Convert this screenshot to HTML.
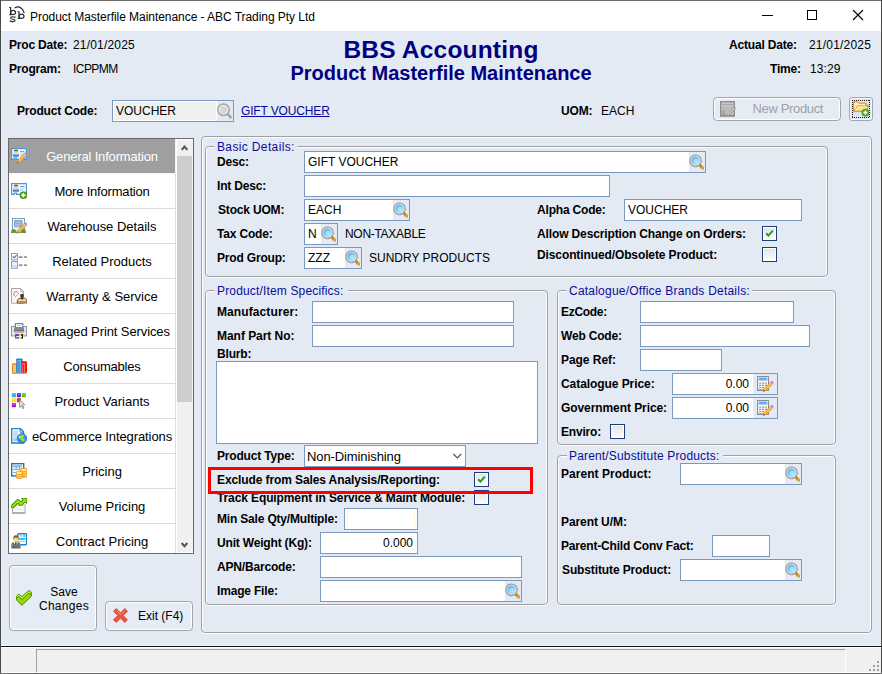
<!DOCTYPE html>
<html>
<head>
<meta charset="utf-8">
<title>Product Masterfile Maintenance</title>
<style>
html,body{margin:0;padding:0;}
body{width:882px;height:674px;overflow:hidden;background:#E3EAF4;font-family:"Liberation Sans",sans-serif;font-size:12px;color:#000;position:relative;}
#win{position:absolute;left:0;top:0;width:882px;height:674px;overflow:hidden;}
.abs,.b,.t,.lg,.in,.ck,.grp,.mi,.btn{position:absolute;box-sizing:border-box;}
.b{font-weight:bold;font-size:12px;line-height:14px;white-space:nowrap;letter-spacing:-0.18px;}
.t{font-weight:normal;font-size:12px;line-height:14px;white-space:nowrap;}
.in{background:#fff;border:1px solid #7A99C0;}
.ck{width:15px;height:15px;background:#fff;border:1px solid #1C3F7C;}
.cki{position:absolute;left:1px;top:1px;right:1px;bottom:1px;background:linear-gradient(#E6E6E6,#FBFBFB);}
.grp{border:1px solid #A0A0A0;border-radius:4px;box-shadow:inset 1px 1px 0 #fff, inset -1px 0 0 #fff, 0 1px 0 #fff;}
.lg{font-size:12px;line-height:14px;color:#0C0C9C;white-space:nowrap;letter-spacing:0.16px;}
.mi{left:9px;width:166px;overflow:hidden;}
.mt{font-size:13px;line-height:35px;text-align:center;white-space:nowrap;}
.btn{border:1px solid #A6A6A6;border-radius:4px;background:#E5ECF6;box-shadow:inset 0 0 0 1px #fff;font-size:12px;}
</style>
</head>
<body>
<div id="win">
<!-- title bar -->
<div class="abs" style="left:0;top:0;width:882px;height:31px;background:#fff;"></div>
<svg class="abs" style="left:8px;top:4px" width="20" height="20" viewBox="0 0 20 20"><g fill="none" stroke="#2C2C2C" stroke-width="1.15"><path d="M1.2 3.5 H2.6 V10.6 M1.2 10.6 H3.6"/><ellipse cx="5.1" cy="8.5" rx="2.4" ry="2.1"/><path d="M7 13.4 Q4.6 12.2 3 13.2 Q1.8 14.8 4.6 15.2 Q7.8 15.7 6.8 17.1 Q4.8 18.4 2.2 16.9 M7 12.6 V13.8 M2.2 16.2 V17.6"/><path d="M9.6 7.9 H11 V14.4 M9.6 14.4 H12"/><ellipse cx="13.6" cy="12.2" rx="2.4" ry="2.1"/><path d="M6.6 3.9 Q11.5 1 14.6 5.6 Q15.8 7.4 16.2 9.2" stroke-width="1.2"/></g></svg>
<div class="abs" id="ttl" style="left:30px;top:8.5px;font-size:12px;line-height:16px;white-space:nowrap;letter-spacing:-0.05px;">Product Masterfile Maintenance - ABC Trading Pty Ltd</div>
<div class="abs" style="left:762px;top:15px;width:11px;height:1px;background:#000;"></div>
<div class="abs" style="left:807px;top:10px;width:10px;height:10px;border:1px solid #000;"></div>
<svg class="abs" style="left:852px;top:9px" width="12" height="12" viewBox="0 0 12 12"><path d="M1 1 L11 11 M11 1 L1 11" stroke="#000" stroke-width="1.1"/></svg>
<!-- header -->
<div class="b" style="left:9px;top:38px;">Proc Date:</div>
<div class="t" style="left:73px;top:38px;letter-spacing:0.18px;">21/01/2025</div>
<div class="b" style="left:9px;top:62px;">Program:</div>
<div class="t" style="left:73px;top:62px;letter-spacing:-0.55px;">ICPPMM</div>
<div class="abs" id="h1" style="left:0;width:882px;top:36px;text-align:center;font-weight:bold;font-size:24.5px;line-height:28px;color:#000080;letter-spacing:0.2px;">BBS Accounting</div>
<div class="abs" id="h2" style="left:0;width:882px;top:61px;text-align:center;font-weight:bold;font-size:20px;line-height:24px;color:#000080;">Product Masterfile Maintenance</div>
<div class="b" style="left:729px;top:38px;">Actual Date:</div>
<div class="t" style="left:809px;top:38px;letter-spacing:0.2px;">21/01/2025</div>
<div class="b" style="left:770px;top:62px;">Time:</div>
<div class="t" style="left:810px;top:62px;letter-spacing:0.1px;">13:29</div>
<!-- product code row -->
<div class="b" style="left:17px;top:104px;">Product Code:</div>
<div class="in" style="left:112px;top:100px;width:122px;height:22px;"><div class="abs" style="left:1px;top:1px;right:17px;bottom:1px;background:#F0F0F0;"></div><div class="abs" style="right:0;top:0;width:16px;height:20px;background:#E3EAF4;"></div><div class="t" style="left:3px;top:3px;">VOUCHER</div></div><svg class="abs" style="left:217px;top:103px" width="16" height="16" viewBox="0 0 16 16"><line x1="11.2" y1="11.6" x2="13.6" y2="14.2" stroke="#A6A6A6" stroke-width="2.8" stroke-linecap="round"/><circle cx="6.5" cy="6.8" r="5.7" fill="#fff" stroke="#9E9E9E" stroke-width="1.5"/><circle cx="6.5" cy="6.8" r="4.2" fill="#D6D6D6"/></svg>
<div class="t" style="left:241px;top:104px;color:#0808A0;text-decoration:underline;letter-spacing:-0.15px;">GIFT VOUCHER</div>
<div class="b" style="left:561px;top:104px;">UOM:</div>
<div class="t" style="left:601px;top:104px;">EACH</div>
<div class="btn" style="left:713px;top:97px;width:128px;height:24px;color:#A0A0A0;font-size:13px;"><span class="abs" id="np" style="left:38.5px;top:3px;line-height:15px;white-space:nowrap;letter-spacing:-0.35px;">New Product</span></div>
<svg class="abs" style="left:720px;top:101px" width="17" height="16" viewBox="0 0 17 16"><rect x="0.6" y="0.6" width="13.8" height="14.6" fill="#BDBDBD" stroke="#8C8C8C" stroke-width="1.2"/><rect x="2" y="2" width="11" height="2.6" fill="#CFCFCF"/><rect x="2.4" y="2.8" width="10.2" height="1" fill="#9C9C9C"/><rect x="1.6" y="9.6" width="3.6" height="3.8" fill="#A4A4A4"/><rect x="1.2" y="13.8" width="12.6" height="1.2" fill="#8C8C8C"/><path d="M14.2 6 L7.4 12.8 L6.4 15 L8.8 14.2 L15.8 7.4Z" fill="#DADADA" stroke="#8A8A8A" stroke-width="0.7"/><path d="M8 13.6 L14.8 6.8" stroke="#9A9A9A" stroke-width="0.6"/></svg>
<div class="abs" style="left:849px;top:97px;width:24px;height:24px;border:1px solid #A4A8AE;border-radius:3px;background:#DCE8F8;box-shadow:inset 0 0 0 1px #F4F8FD;"></div>
<svg class="abs" style="left:852px;top:100px" width="18" height="18" viewBox="0 0 18 18"><g stroke="#2A1A0A" stroke-width="1" stroke-dasharray="1 1" shape-rendering="crispEdges"><line x1="0" y1="0.5" x2="18" y2="0.5"/><line x1="0" y1="17.5" x2="18" y2="17.5"/><line x1="0.5" y1="0" x2="0.5" y2="18"/><line x1="17.5" y1="0" x2="17.5" y2="18"/></g></svg>
<svg class="abs" style="left:853px;top:101px" width="16" height="16" viewBox="0 0 16 16"><g transform="translate(0,-0.8)"><path d="M0.6 1.6 H5 L6.2 2.8 H13 V5 H15.4 L13.4 11.4 H0.6Z" fill="#F4C060" stroke="#D89030" stroke-width="1"/><path d="M1.4 2.6 H4.6 L5.8 3.8 H12 V5 H4.6 L2.2 10.4 H1.4Z" fill="#FFF4C0"/><path d="M1.2 11 L4.4 5.8 H15 L13 11Z" fill="#FCE090" stroke="#D89030" stroke-width="0.8"/><path d="M2.6 10.2 L5 6.8 H13.4" fill="none" stroke="#FFF8D0" stroke-width="0.9"/></g><circle cx="12.4" cy="11.6" r="3.6" fill="#4CA81C" stroke="#38900C" stroke-width="0.6"/><path d="M12.4 9.5 V13.7 M10.3 11.6 H14.5" stroke="#fff" stroke-width="1.5"/></svg>

<!-- left menu -->
<div class="abs" style="left:8px;top:138px;width:186px;height:416px;border:1px solid #6A6A6A;background:#fff;"></div>
<div class="mi" style="top:139px;height:34px;background:#9F9F9F;color:#fff;"><div class="abs" style="left:2px;top:9px;width:16px;height:16px;"><svg width="16" height="16" viewBox="0 0 16 16"><path d="M0.6 0.6 H15.4 V11.4 H13.6 V10.2 H11.4 V11.4 H5.6 V10.2 H3.2 V11.4 H0.6Z" fill="#fff" stroke="#4A98D8" stroke-width="1.2"/><rect x="2" y="2" width="6" height="6.8" fill="#D8ECFC"/><path d="M2 8.8 V6.6 Q3.4 5.8 5 6.8 Q6.6 5.8 8 6.6 V8.8Z" fill="#3A86E0"/><rect x="4.4" y="4.6" width="1.3" height="2" fill="#F0C890"/><circle cx="5" cy="3.9" r="1.5" fill="#F4CC98"/><path d="M3.2 4 Q2.8 1.6 5 1.6 Q7.2 1.6 6.8 4 Q6.4 2.8 5 2.9 Q3.6 2.8 3.2 4Z" fill="#8A4A12"/><rect x="9" y="3.2" width="4.4" height="1" fill="#4A8CD8"/><rect x="9" y="5.2" width="4.4" height="0.8" fill="#C8E0F4"/><rect x="9" y="6.6" width="2.6" height="0.8" fill="#9A9A9A"/><path d="M13 5.6 L15.3 7.9 L8.7 14.5 L6.4 12.2Z" fill="#F59A1A"/><path d="M13.6 6.2 L14.7 7.3 L8.1 13.9 L7 12.8Z" fill="#FFC040"/><path d="M6.4 12.2 L8.7 14.5 L5.9 15.5Z" fill="#C89060"/><path d="M5.9 15.5 L6.3 14.3 L7.1 15.1Z" fill="#604020"/><path d="M12 6.6 L13 5.6 L15.3 7.9 L14.3 8.9Z" fill="#E8E8E8" stroke="#808080" stroke-width="0.4"/><path d="M13 5.6 L14 4.6 Q15.2 4.2 15.9 5 Q16.6 5.9 16.2 6.9 L15.3 7.9Z" fill="#E878C8"/></svg></div><div class="abs mt" id="m0" style="left:18px;width:150px;top:0;letter-spacing:-0.17px;">General Information</div></div><div class="abs" style="left:9px;top:173px;width:166px;height:1px;background:#F4F4F4;"></div><div class="mi" style="top:174px;height:34px;background:#fff;color:#000;"><div class="abs" style="left:2px;top:9px;width:16px;height:16px;"><svg width="16" height="16" viewBox="0 0 16 16"><path d="M0.6 0.6 H15.4 V11.4 H13.6 V10.2 H11.4 V11.4 H5.6 V10.2 H3.2 V11.4 H0.6Z" fill="#fff" stroke="#4A98D8" stroke-width="1.2"/><rect x="2" y="2" width="6" height="6.8" fill="#D8ECFC"/><path d="M2 8.8 V6.6 Q3.4 5.8 5 6.8 Q6.6 5.8 8 6.6 V8.8Z" fill="#3A86E0"/><rect x="4.4" y="4.6" width="1.3" height="2" fill="#F0C890"/><circle cx="5" cy="3.9" r="1.5" fill="#F4CC98"/><path d="M3.2 4 Q2.8 1.6 5 1.6 Q7.2 1.6 6.8 4 Q6.4 2.8 5 2.9 Q3.6 2.8 3.2 4Z" fill="#8A4A12"/><rect x="9" y="3.2" width="4.4" height="1" fill="#4A8CD8"/><rect x="9" y="5.2" width="4.4" height="0.8" fill="#C8E0F4"/><rect x="9" y="6.6" width="2.6" height="0.8" fill="#9A9A9A"/><circle cx="12.4" cy="12.2" r="3.5" fill="#58A820" stroke="#3A8010" stroke-width="0.7"/><path d="M12.4 10.1 V14.3 M10.3 12.2 H14.5" stroke="#fff" stroke-width="1.5"/></svg></div><div class="abs mt" id="m1" style="left:18px;width:150px;top:0;letter-spacing:-0.19px;">More Information</div></div><div class="abs" style="left:9px;top:208px;width:166px;height:1px;background:#DCDCDC;"></div><div class="mi" style="top:209px;height:34px;background:#fff;color:#000;"><div class="abs" style="left:2px;top:9px;width:16px;height:16px;"><svg width="16" height="16" viewBox="0 0 16 16"><rect x="1.5" y="0.5" width="12" height="12.5" fill="#F4F8FD" stroke="#7A9BC4"/><rect x="3" y="2" width="8.6" height="7.6" rx="1" fill="#8CA8CC"/><g fill="#F0F4FA"><rect x="4.6" y="3.9" width="1" height="0.9"/><rect x="6.6" y="3.9" width="1" height="0.9"/><rect x="8.6" y="3.9" width="1" height="0.9"/><rect x="4.6" y="5.9" width="1" height="0.9"/><rect x="6.6" y="5.9" width="1" height="0.9"/><rect x="8.6" y="5.9" width="1" height="0.9"/><rect x="4.6" y="7.9" width="1" height="0.9"/><rect x="6.6" y="7.9" width="1" height="0.9"/></g><path d="M0 14.4 Q0.2 11 2.6 11 Q5 11 5.2 14.4Z" fill="#5AA01E"/><path d="M9.8 14.4 Q10 11 12.4 11 Q14.8 11 15 14.4Z" fill="#5AA01E"/><rect x="0" y="14" width="15" height="0.9" fill="#6A8A4A"/><path d="M13 5.6 L15.3 7.9 L8.7 14.5 L6.4 12.2Z" fill="#F59A1A"/><path d="M13.6 6.2 L14.7 7.3 L8.1 13.9 L7 12.8Z" fill="#FFC040"/><path d="M6.4 12.2 L8.7 14.5 L5.9 15.5Z" fill="#C89060"/><path d="M5.9 15.5 L6.3 14.3 L7.1 15.1Z" fill="#604020"/><path d="M12 6.6 L13 5.6 L15.3 7.9 L14.3 8.9Z" fill="#E8E8E8" stroke="#808080" stroke-width="0.4"/><path d="M13 5.6 L14 4.6 Q15.2 4.2 15.9 5 Q16.6 5.9 16.2 6.9 L15.3 7.9Z" fill="#E878C8"/></svg></div><div class="abs mt" id="m2" style="left:18px;width:150px;top:0;letter-spacing:-0.03px;">Warehouse Details</div></div><div class="abs" style="left:9px;top:243px;width:166px;height:1px;background:#DCDCDC;"></div><div class="mi" style="top:244px;height:34px;background:#fff;color:#000;"><div class="abs" style="left:2px;top:9px;width:16px;height:16px;"><svg width="16" height="16" viewBox="0 0 16 16"><rect x="0.5" y="0.5" width="6" height="6.4" fill="#fff" stroke="#8CA0C0"/><path d="M1.8 3.4 L3.2 4.8 L5.6 2.2" fill="none" stroke="#2A78D0" stroke-width="1.2"/><rect x="0.5" y="8.5" width="6" height="6.8" fill="#EEF3FA" stroke="#8CA0C0"/><rect x="1" y="12" width="5" height="2.8" fill="#D4E0F0"/><g fill="#858585"><rect x="7.8" y="3.3" width="3.8" height="1.5"/><rect x="13" y="3.3" width="3" height="1.5"/><rect x="7.8" y="11.4" width="3.8" height="1.5"/><rect x="13" y="11.4" width="3" height="1.5"/></g></svg></div><div class="abs mt" id="m3" style="left:18px;width:150px;top:0;letter-spacing:0px;">Related Products</div></div><div class="abs" style="left:9px;top:278px;width:166px;height:1px;background:#DCDCDC;"></div><div class="mi" style="top:279px;height:34px;background:#fff;color:#000;"><div class="abs" style="left:2px;top:9px;width:16px;height:16px;"><svg width="16" height="16" viewBox="0 0 16 16"><path d="M0.5 0.5 H9.5 L12.4 3.4 V15.2 H0.5Z" fill="#fff" stroke="#A4A4A4"/><path d="M9.5 0.5 V3.4 H12.4" fill="none" stroke="#A4A4A4" stroke-width="0.8"/><rect x="1.6" y="2" width="3" height="11" fill="#EEF2F6"/><path d="M5.2 3 L8 5.6 L4.6 8.6 L2.2 6.2Z" fill="none" stroke="#E82020" stroke-width="1" stroke-dasharray="0.9 0.6"/><path d="M6.2 15 Q5.8 10.2 9 10.2 H13.4 Q16.2 10.2 15.8 15Z" fill="#F0D4A8" stroke="#8A4A10" stroke-width="1"/><rect x="7" y="13" width="8" height="1" fill="#C88838"/><rect x="9.9" y="8" width="2.2" height="3.4" fill="#2A3A50"/><ellipse cx="11" cy="7.6" rx="1.9" ry="1.9" fill="#3A3A3A"/></svg></div><div class="abs mt" id="m4" style="left:18px;width:150px;top:0;letter-spacing:0px;">Warranty &amp; Service</div></div><div class="abs" style="left:9px;top:313px;width:166px;height:1px;background:#DCDCDC;"></div><div class="mi" style="top:314px;height:34px;background:#fff;color:#000;"><div class="abs" style="left:2px;top:9px;width:16px;height:16px;"><svg width="16" height="16" viewBox="0 0 16 16"><rect x="0.5" y="3.5" width="15" height="9.4" fill="#E6EAEE" stroke="#929292"/><rect x="4.4" y="0.6" width="7.4" height="4" fill="#fff" stroke="#3A88D0" stroke-width="1.1"/><rect x="6" y="2.2" width="4" height="0.8" fill="#A0C8F0"/><rect x="3" y="4.6" width="10" height="2.4" fill="#8A8A8A"/><rect x="2.8" y="7" width="10.4" height="1.6" fill="#6E6E6E"/><rect x="3" y="8.6" width="10" height="1.6" fill="#B8BCC4"/><rect x="4" y="11" width="8" height="4.6" fill="#fff"/><rect x="4" y="11" width="2" height="4.6" fill="#0878E0"/><rect x="6" y="11" width="2" height="4.6" fill="#E81090"/><rect x="8" y="11" width="2.2" height="4.6" fill="#F8E000"/><rect x="10.2" y="11" width="1.8" height="4.6" fill="#202020"/><rect x="5" y="13.2" width="6" height="0.9" fill="#fff"/></svg></div><div class="abs mt" id="m5" style="left:18px;width:150px;top:0;letter-spacing:-0.1px;">Managed Print Services</div></div><div class="abs" style="left:9px;top:348px;width:166px;height:1px;background:#DCDCDC;"></div><div class="mi" style="top:349px;height:34px;background:#fff;color:#000;"><div class="abs" style="left:2px;top:9px;width:16px;height:16px;"><svg width="16" height="16" viewBox="0 0 16 16"><rect x="1" y="5.2" width="5" height="9.8" rx="1" fill="#F08A10"/><rect x="2.2" y="6.6" width="2.8" height="8.4" fill="#F8C878"/><rect x="5.2" y="0.4" width="6.4" height="14.6" rx="1.2" fill="#2A80D0"/><rect x="6.4" y="2" width="3.6" height="13" fill="#70B8F4"/><rect x="7.2" y="3" width="1.4" height="12" fill="#3A88D8"/><rect x="10" y="3.2" width="6" height="11.8" rx="1.2" fill="#E81010"/><rect x="10.6" y="5" width="3.6" height="10" fill="#FF6A60"/><rect x="11.6" y="6" width="1.4" height="9" fill="#F02A20"/><rect x="1" y="14.8" width="14" height="0.9" fill="#8A8A8A"/></svg></div><div class="abs mt" id="m6" style="left:18px;width:150px;top:0;letter-spacing:-0.2px;">Consumables</div></div><div class="abs" style="left:9px;top:383px;width:166px;height:1px;background:#DCDCDC;"></div><div class="mi" style="top:384px;height:34px;background:#fff;color:#000;"><div class="abs" style="left:2px;top:9px;width:16px;height:16px;"><svg width="16" height="16" viewBox="0 0 16 16"><rect x="0.9" y="0.2" width="4" height="4" fill="#20A8FF"/><rect x="5.9" y="0.2" width="4" height="4" fill="#2232D8"/><rect x="10.9" y="0.2" width="4" height="4" fill="#60C000"/><rect x="0.9" y="5.2" width="4" height="4" fill="#FFE000"/><rect x="5.9" y="5.2" width="4" height="4" fill="#F02810"/><rect x="0.9" y="10.2" width="4" height="4" fill="#B400F0"/><g fill="#fff" opacity="0.45"><rect x="1.9" y="1.2" width="2" height="1"/><rect x="6.9" y="1.2" width="2" height="1"/><rect x="11.9" y="1.2" width="2" height="1"/><rect x="1.9" y="6.2" width="2" height="1"/><rect x="1.9" y="11.2" width="2" height="1"/></g><path d="M8.6 6.8 L8.6 14.4 L10.4 12.8 L11.8 15.6 L13 15 L11.6 12.2 L13.8 11.8Z" fill="#E4E4E4" stroke="#8A8A8A" stroke-width="0.9"/></svg></div><div class="abs mt" id="m7" style="left:18px;width:150px;top:0;letter-spacing:0px;">Product Variants</div></div><div class="abs" style="left:9px;top:418px;width:166px;height:1px;background:#DCDCDC;"></div><div class="mi" style="top:419px;height:34px;background:#fff;color:#000;"><div class="abs" style="left:2px;top:9px;width:16px;height:16px;"><svg width="16" height="16" viewBox="0 0 16 16"><path d="M0.7 0.7 H9.6 L12.6 3.7 V15 H0.7Z" fill="#fff" stroke="#2080C8" stroke-width="1.3"/><path d="M9.2 0.8 V4.2 H12.6" fill="none" stroke="#2080C8" stroke-width="1"/><rect x="2.2" y="2.4" width="4.6" height="7.6" fill="#C4DCF0"/><rect x="2.2" y="10.4" width="4.6" height="3" fill="#A8CCE8"/><circle cx="11" cy="10.4" r="4.8" fill="#2A90F0" stroke="#1A6CC8" stroke-width="0.7"/><path d="M9.2 7.2 Q11 6 13 7 L13.6 8.6 L12.2 9.6 L13 11.2 L14 11.6 Q13.4 13.8 11.8 14 L10.8 12.4 L9.4 11.6 Q8.6 9.2 9.2 7.2Z" fill="#A0E010"/><ellipse cx="8.6" cy="9" rx="1" ry="1.6" fill="#C8E8FF" opacity="0.8"/></svg></div><div class="abs mt" id="m8" style="left:18px;width:150px;top:0;letter-spacing:-0.1px;">eCommerce Integrations</div></div><div class="abs" style="left:9px;top:453px;width:166px;height:1px;background:#DCDCDC;"></div><div class="mi" style="top:454px;height:34px;background:#fff;color:#000;"><div class="abs" style="left:2px;top:9px;width:16px;height:16px;"><svg width="16" height="16" viewBox="0 0 16 16"><rect x="0.7" y="0.7" width="12" height="12.2" fill="#fff" stroke="#1878C0" stroke-width="1.4"/><g fill="#F8B020"><rect x="2" y="2.2" width="2.6" height="1"/><rect x="6" y="2.2" width="2" height="1"/><rect x="9" y="2.2" width="2" height="1"/></g><path d="M2 3.8H11M2 6.4H9M2 9.4H5M5.2 2V7M8.4 2V6" stroke="#5AA0E0" stroke-width="0.9"/><rect x="9.6" y="5.2" width="6.2" height="9" rx="1.4" fill="#FFD850" stroke="#F09020" stroke-width="0.9"/><path d="M10.4 8.6H15M10.4 10.8H15M10.4 12.6H15" stroke="#F0A030" stroke-width="0.8"/><rect x="10.6" y="6" width="4.2" height="1.6" fill="#FFF0A0"/><rect x="5.2" y="8.2" width="6.4" height="7.2" rx="1.4" fill="#FFD850" stroke="#F09020" stroke-width="0.9"/><path d="M6 11.4H10.8M6 13.4H10.8" stroke="#F0A030" stroke-width="0.8"/><rect x="6.2" y="9" width="4.4" height="1.6" fill="#FFF0A0"/></svg></div><div class="abs mt" id="m9" style="left:18px;width:150px;top:0;letter-spacing:0px;">Pricing</div></div><div class="abs" style="left:9px;top:488px;width:166px;height:1px;background:#DCDCDC;"></div><div class="mi" style="top:489px;height:34px;background:#fff;color:#000;"><div class="abs" style="left:2px;top:9px;width:16px;height:16px;"><svg width="16" height="16" viewBox="0 0 16 16"><rect x="1.5" y="7" width="12.6" height="8.2" fill="#fff" stroke="#ABABAB"/><rect x="1.5" y="14.2" width="12.6" height="1.2" fill="#A0A0A0"/><path d="M2 10H14M2 12H14" stroke="#DADADA" stroke-width="0.7"/><path d="M1.8 8.4 L6.8 3 L10 6 L13.6 2.4" fill="none" stroke="#3A8E00" stroke-width="3.8" stroke-linecap="round" stroke-linejoin="round"/><path d="M10.4 0.3 H15.9 V5.8Z" fill="#9ADA00" stroke="#3A8E00" stroke-width="0.9" stroke-linejoin="round"/><path d="M1.8 8.4 L6.8 3 L10 6 L13.6 2.4" fill="none" stroke="#A6E000" stroke-width="2" stroke-linecap="round" stroke-linejoin="round"/></svg></div><div class="abs mt" id="m10" style="left:18px;width:150px;top:0;letter-spacing:0px;">Volume Pricing</div></div><div class="abs" style="left:9px;top:523px;width:166px;height:1px;background:#DCDCDC;"></div><div class="mi" style="top:524px;height:29px;background:#fff;color:#000;"><div class="abs" style="left:2px;top:9px;width:16px;height:16px;"><svg width="16" height="16" viewBox="0 0 16 16"><rect x="6.7" y="0.7" width="8.8" height="11" rx="0.8" fill="#fff" stroke="#1888D0" stroke-width="1.4"/><rect x="8.2" y="2.4" width="3.4" height="1" fill="#A0A0A0"/><rect x="12.4" y="2.2" width="1.6" height="1.6" fill="#10B8F0"/><rect x="8" y="5" width="6" height="1.8" fill="#10C0F0"/><rect x="8.2" y="8" width="5.4" height="0.8" fill="#D8A0A0"/><path d="M0.3 15.4 V11.4 Q0.5 9.4 3 9 L7 9 Q9.4 9.4 9.6 11.4 V15.4Z" fill="#686868"/><path d="M2.6 9 L4.9 13.6 L7.2 9Z" fill="#fff"/><path d="M4.2 9.3 H5.6 L5.4 12.8 H4.4Z" fill="#141414"/><path d="M1.2 11.4 L2 13.2 M8.6 11.4 L7.8 13.2" stroke="#D0D0D0" stroke-width="0.6"/><ellipse cx="4.9" cy="6.2" rx="2.5" ry="2.9" fill="#F8D488"/><path d="M2.2 6.4 Q1.8 2.2 5 2.2 Q8 2.2 7.6 6.4 Q7 4.2 5 4.4 Q3 4.2 2.2 6.4Z" fill="#9A5A14"/></svg></div><div class="abs mt" id="m11" style="left:18px;width:150px;top:0;letter-spacing:0px;">Contract Pricing</div></div>
<!-- scrollbar -->
<div class="abs" style="left:175px;top:173px;width:1px;height:380px;background:#DEDEDE;"></div>
<div class="abs" style="left:175px;top:139px;width:1px;height:34px;background:#F4F4F4;"></div>
<div class="abs" style="left:176px;top:139px;width:17px;height:414px;background:#fff;"></div>
<div class="abs" style="left:177px;top:140px;width:16px;height:412px;background:#F0F0F0;"></div>
<div class="abs" style="left:177px;top:156px;width:15px;height:246px;background:#CDCDCD;"></div>
<svg class="abs" style="left:176px;top:139px" width="17" height="17" viewBox="0 0 17 17"><path d="M5.7 10.9 L8.5 7.6 L11.3 10.9" fill="none" stroke="#505050" stroke-width="2"/></svg>
<svg class="abs" style="left:176px;top:536px" width="17" height="17" viewBox="0 0 17 17"><path d="M5.7 7 L8.5 10.3 L11.3 7" fill="none" stroke="#505050" stroke-width="2"/></svg>

<!-- bottom-left buttons -->
<div class="btn" style="left:9px;top:565px;width:88px;height:66px;"></div>
<svg class="abs" style="left:16px;top:590px" width="16" height="16" viewBox="0 0 16 16"><path d="M2.9 3.9 L0.4 6.4 V9.8 L5.8 15.4 L15.6 6 V2.5 L12.9 0.4 L5.8 6.7Z" fill="#9ED400" stroke="#2E8500" stroke-width="0.9" stroke-linejoin="round"/><path d="M0.6 8.2 L2.9 6.6 L5.8 9.6 L12.9 3.3 L15.4 4.9" fill="none" stroke="#3C9600" stroke-width="0.9"/><path d="M1.2 6.6 L2.9 5.1 L5.8 8 L12.9 1.7 L14.6 3" fill="none" stroke="#E6F45A" stroke-width="1"/></svg>
<div class="abs" id="sv1" style="left:34px;width:60px;top:585px;text-align:center;font-size:12px;line-height:14px;">Save</div>
<div class="abs" id="sv2" style="left:34px;width:60px;top:599px;text-align:center;font-size:12px;line-height:14px;letter-spacing:0.3px;">Changes</div>
<div class="btn" style="left:105px;top:601px;width:88px;height:30px;"></div>
<svg class="abs" style="left:112.6px;top:607.8px" width="15" height="15" viewBox="0 0 15 15"><path d="M3.2 0.6 L7.5 4.9 L11.8 0.6 L14.4 3.2 L10.1 7.5 L14.4 11.8 L11.8 14.4 L7.5 10.1 L3.2 14.4 L0.6 11.8 L4.9 7.5 L0.6 3.2Z" fill="#EE5540" stroke="#D03A22" stroke-width="0.9" stroke-linejoin="round"/><path d="M3.2 2.2 L7.5 6.5 L11.8 2.2" fill="none" stroke="#F8A090" stroke-width="0.8"/></svg>
<div class="abs" id="ex" style="left:138px;top:609px;font-size:12px;line-height:14px;white-space:nowrap;">Exit (F4)</div>

<!-- main panel -->
<div class="grp" style="left:201px;top:136px;width:671px;height:497px;"></div>
<div class="grp" style="left:205px;top:146px;width:623px;height:131px;"></div><div class="abs" style="left:215px;top:144px;width:82px;height:5px;background:#E3EAF4;"></div><div class="lg" style="left:217px;top:140px;letter-spacing:0.36px;">Basic Details:</div>
<div class="b" style="left:217px;top:155px;">Desc:</div>
<div class="in" style="left:304px;top:151px;width:402px;height:22px;"><div class="abs" style="right:0;top:0;width:16px;height:20px;background:#E3EAF4;"></div><div class="t" style="left:3px;top:3px;">GIFT VOUCHER</div></div><svg class="abs" style="left:689px;top:154px" width="16" height="16" viewBox="0 0 16 16"><defs><radialGradient id="lg689_154" cx="0.62" cy="0.66" r="0.7"><stop offset="0" stop-color="#BDEBFB"/><stop offset="0.55" stop-color="#8FD0F6"/><stop offset="1" stop-color="#469FEA"/></radialGradient></defs><line x1="11.2" y1="11.6" x2="13.5" y2="14.1" stroke="#CC861C" stroke-width="3" stroke-linecap="round"/><circle cx="13.3" cy="13.9" r="0.9" fill="#F6C050"/><circle cx="6.5" cy="6.8" r="5.7" fill="#fff" stroke="#9A9A9A" stroke-width="1.4"/><circle cx="6.5" cy="6.8" r="4.3" fill="url(#lg689_154)"/></svg>
<div class="b" style="left:217px;top:179px;">Int Desc:</div>
<div class="in" style="left:304px;top:175px;width:306px;height:22px;"></div>
<div class="b" style="left:218px;top:203px;">Stock UOM:</div>
<div class="in" style="left:304px;top:199px;width:106px;height:22px;"><div class="abs" style="right:0;top:0;width:16px;height:20px;background:#E3EAF4;"></div><div class="t" style="left:3px;top:3px;">EACH</div></div><svg class="abs" style="left:393px;top:202px" width="16" height="16" viewBox="0 0 16 16"><defs><radialGradient id="lg393_202" cx="0.62" cy="0.66" r="0.7"><stop offset="0" stop-color="#BDEBFB"/><stop offset="0.55" stop-color="#8FD0F6"/><stop offset="1" stop-color="#469FEA"/></radialGradient></defs><line x1="11.2" y1="11.6" x2="13.5" y2="14.1" stroke="#CC861C" stroke-width="3" stroke-linecap="round"/><circle cx="13.3" cy="13.9" r="0.9" fill="#F6C050"/><circle cx="6.5" cy="6.8" r="5.7" fill="#fff" stroke="#9A9A9A" stroke-width="1.4"/><circle cx="6.5" cy="6.8" r="4.3" fill="url(#lg393_202)"/></svg>
<div class="b" style="left:217px;top:227px;">Tax Code:</div>
<div class="in" style="left:304px;top:223px;width:34px;height:22px;"><div class="abs" style="right:0;top:0;width:16px;height:20px;background:#E3EAF4;"></div><div class="t" style="left:3px;top:3px;">N</div></div><svg class="abs" style="left:321px;top:226px" width="16" height="16" viewBox="0 0 16 16"><defs><radialGradient id="lg321_226" cx="0.62" cy="0.66" r="0.7"><stop offset="0" stop-color="#BDEBFB"/><stop offset="0.55" stop-color="#8FD0F6"/><stop offset="1" stop-color="#469FEA"/></radialGradient></defs><line x1="11.2" y1="11.6" x2="13.5" y2="14.1" stroke="#CC861C" stroke-width="3" stroke-linecap="round"/><circle cx="13.3" cy="13.9" r="0.9" fill="#F6C050"/><circle cx="6.5" cy="6.8" r="5.7" fill="#fff" stroke="#9A9A9A" stroke-width="1.4"/><circle cx="6.5" cy="6.8" r="4.3" fill="url(#lg321_226)"/></svg>
<div class="t" style="left:345px;top:227px;letter-spacing:-0.3px;">NON-TAXABLE</div>
<div class="b" style="left:217px;top:251px;">Prod Group:</div>
<div class="in" style="left:304px;top:247px;width:58px;height:22px;"><div class="abs" style="right:0;top:0;width:16px;height:20px;background:#E3EAF4;"></div><div class="t" style="left:3px;top:3px;">ZZZ</div></div><svg class="abs" style="left:345px;top:250px" width="16" height="16" viewBox="0 0 16 16"><defs><radialGradient id="lg345_250" cx="0.62" cy="0.66" r="0.7"><stop offset="0" stop-color="#BDEBFB"/><stop offset="0.55" stop-color="#8FD0F6"/><stop offset="1" stop-color="#469FEA"/></radialGradient></defs><line x1="11.2" y1="11.6" x2="13.5" y2="14.1" stroke="#CC861C" stroke-width="3" stroke-linecap="round"/><circle cx="13.3" cy="13.9" r="0.9" fill="#F6C050"/><circle cx="6.5" cy="6.8" r="5.7" fill="#fff" stroke="#9A9A9A" stroke-width="1.4"/><circle cx="6.5" cy="6.8" r="4.3" fill="url(#lg345_250)"/></svg>
<div class="t" style="left:369px;top:251px;">SUNDRY PRODUCTS</div>
<div class="b" style="left:537px;top:203px;">Alpha Code:</div>
<div class="in" style="left:624px;top:199px;width:178px;height:22px;"><div class="t" style="left:3px;top:3px;">VOUCHER</div></div>
<div class="b" style="left:537px;top:227px;letter-spacing:-0.13px;">Allow Description Change on Orders:</div>
<div class="ck" style="left:762px;top:226px;"><div class="cki"></div><svg class="abs" style="left:2px;top:2px" width="9" height="9" viewBox="0 0 9 9"><path d="M1.2 4.3 L3.4 6.6 L7.8 1.6" fill="none" stroke="#1E9E1E" stroke-width="2"/></svg></div>
<div class="b" style="left:537px;top:248px;letter-spacing:-0.11px;">Discontinued/Obsolete Product:</div>
<div class="ck" style="left:762px;top:247px;"><div class="cki"></div></div>

<div class="grp" style="left:205px;top:290px;width:343px;height:315px;"></div><div class="abs" style="left:215px;top:288px;width:133px;height:5px;background:#E3EAF4;"></div><div class="lg" style="left:217px;top:284px;letter-spacing:0.16px;">Product/Item Specifics:</div>
<div class="b" style="left:217px;top:305px;letter-spacing:0.1px;">Manufacturer:</div>
<div class="in" style="left:312px;top:301px;width:202px;height:22px;"></div>
<div class="b" style="left:217px;top:329px;letter-spacing:-0.04px;">Manf Part No:</div>
<div class="in" style="left:312px;top:325px;width:202px;height:22px;"></div>
<div class="b" style="left:217px;top:347px;">Blurb:</div>
<div class="in" style="left:216px;top:361px;width:322px;height:83px;"></div>
<div class="b" style="left:217px;top:449px;">Product Type:</div>
<div class="in" style="left:304px;top:445px;width:162px;height:22px;"></div>
<div class="abs" id="pt" style="left:307px;top:449px;font-size:13px;line-height:15px;white-space:nowrap;letter-spacing:-0.1px;">Non-Diminishing</div>
<svg class="abs" style="left:451px;top:452px" width="12" height="8" viewBox="0 0 12 8"><path d="M2.4 2 L6.3 5.9 L10.2 2" fill="none" stroke="#505050" stroke-width="1.1"/></svg>
<div class="b" style="left:217px;top:491px;letter-spacing:-0.11px;">Track Equipment in Service &amp; Maint Module:</div>
<div class="ck" style="left:474px;top:490px;"><div class="cki"></div></div>
<div class="abs" style="left:208px;top:467px;width:325px;height:27px;border:3px solid #FF0000;box-sizing:border-box;"></div>
<div class="b" style="left:217px;top:473px;letter-spacing:-0.105px;">Exclude from Sales Analysis/Reporting:</div>
<div class="ck" style="left:474px;top:472px;"><div class="cki"></div><svg class="abs" style="left:2px;top:2px" width="9" height="9" viewBox="0 0 9 9"><path d="M1.2 4.3 L3.4 6.6 L7.8 1.6" fill="none" stroke="#1E9E1E" stroke-width="2"/></svg></div>
<div class="b" style="left:217px;top:512px;">Min Sale Qty/Multiple:</div>
<div class="in" style="left:344px;top:508px;width:74px;height:22px;"></div>
<div class="abs" style="left:347px;top:511px;width:1px;height:16px;background:#FDF1DE;"></div><div class="abs" style="left:414px;top:511px;width:1px;height:16px;background:#FDF1DE;"></div>
<div class="b" style="left:217px;top:536px;">Unit Weight (Kg):</div>
<div class="in" style="left:320px;top:532px;width:98px;height:22px;"><div class="t" style="right:4px;top:3px;">0.000</div></div>
<div class="b" style="left:217px;top:560px;">APN/Barcode:</div>
<div class="in" style="left:320px;top:556px;width:202px;height:22px;"></div>
<div class="b" style="left:217px;top:584px;">Image File:</div>
<div class="in" style="left:320px;top:580px;width:202px;height:22px;"><div class="abs" style="right:0;top:0;width:16px;height:20px;background:#E3EAF4;"></div></div><svg class="abs" style="left:505px;top:583px" width="16" height="16" viewBox="0 0 16 16"><defs><radialGradient id="lg505_583" cx="0.62" cy="0.66" r="0.7"><stop offset="0" stop-color="#BDEBFB"/><stop offset="0.55" stop-color="#8FD0F6"/><stop offset="1" stop-color="#469FEA"/></radialGradient></defs><line x1="11.2" y1="11.6" x2="13.5" y2="14.1" stroke="#CC861C" stroke-width="3" stroke-linecap="round"/><circle cx="13.3" cy="13.9" r="0.9" fill="#F6C050"/><circle cx="6.5" cy="6.8" r="5.7" fill="#fff" stroke="#9A9A9A" stroke-width="1.4"/><circle cx="6.5" cy="6.8" r="4.3" fill="url(#lg505_583)"/></svg>

<div class="grp" style="left:557px;top:290px;width:279px;height:155px;"></div><div class="abs" style="left:567px;top:288px;width:185px;height:5px;background:#E3EAF4;"></div><div class="lg" style="left:569px;top:284px;letter-spacing:0.22px;">Catalogue/Office Brands Details:</div>
<div class="b" style="left:561px;top:305px;letter-spacing:-0.3px;">EzCode:</div>
<div class="in" style="left:640px;top:301px;width:154px;height:22px;"></div>
<div class="b" style="left:561px;top:329px;">Web Code:</div>
<div class="in" style="left:640px;top:325px;width:170px;height:22px;"></div>
<div class="b" style="left:561px;top:353px;letter-spacing:-0.05px;">Page Ref:</div>
<div class="in" style="left:640px;top:349px;width:82px;height:22px;"></div>
<div class="b" style="left:561px;top:377px;letter-spacing:-0.07px;">Catalogue Price:</div>
<div class="in" style="left:672px;top:373px;width:106px;height:22px;"><div class="abs" style="right:0;top:0;width:24px;height:20px;background:#E3EAF4;"></div><div class="t" style="right:28px;top:3px;">0.00</div></div><svg class="abs" style="left:757px;top:376px" width="17" height="16" viewBox="0 0 17 16"><rect x="0.5" y="0.5" width="11" height="14" fill="#F8F8F8" stroke="#8C8C8C"/><rect x="1" y="13.2" width="10" height="1.3" fill="#9A9A9A"/><rect x="1.5" y="1.5" width="9" height="3.2" fill="#7ABCF6"/><rect x="2.4" y="2.4" width="7.2" height="0.9" fill="#4A98E8"/><g fill="#8E8E8E"><rect x="5" y="6.6" width="2.2" height="1.1"/><rect x="2" y="8.8" width="2.2" height="1.1"/><rect x="5" y="8.8" width="2.2" height="1.1"/><rect x="8" y="8.8" width="2" height="1.1"/><rect x="2" y="11" width="2.2" height="1.1"/><rect x="5" y="11" width="2.2" height="1.1"/></g><g fill="#F08030"><rect x="2" y="6.6" width="2.2" height="1.1"/><rect x="8" y="6.6" width="2" height="1.1"/></g><g transform="translate(0.2,0.5)"><path d="M13 5.6 L15.3 7.9 L8.7 14.5 L6.4 12.2Z" fill="#F59A1A"/><path d="M13.6 6.2 L14.7 7.3 L8.1 13.9 L7 12.8Z" fill="#FFC040"/><path d="M6.4 12.2 L8.7 14.5 L5.9 15.5Z" fill="#C89060"/><path d="M5.9 15.5 L6.3 14.3 L7.1 15.1Z" fill="#604020"/><path d="M12 6.6 L13 5.6 L15.3 7.9 L14.3 8.9Z" fill="#E8E8E8" stroke="#808080" stroke-width="0.4"/><path d="M13 5.6 L14 4.6 Q15.2 4.2 15.9 5 Q16.6 5.9 16.2 6.9 L15.3 7.9Z" fill="#E878C8"/></g></svg>
<div class="b" style="left:561px;top:401px;letter-spacing:-0.08px;">Government Price:</div>
<div class="in" style="left:672px;top:397px;width:106px;height:22px;"><div class="abs" style="right:0;top:0;width:24px;height:20px;background:#E3EAF4;"></div><div class="t" style="right:28px;top:3px;">0.00</div></div><svg class="abs" style="left:757px;top:400px" width="17" height="16" viewBox="0 0 17 16"><rect x="0.5" y="0.5" width="11" height="14" fill="#F8F8F8" stroke="#8C8C8C"/><rect x="1" y="13.2" width="10" height="1.3" fill="#9A9A9A"/><rect x="1.5" y="1.5" width="9" height="3.2" fill="#7ABCF6"/><rect x="2.4" y="2.4" width="7.2" height="0.9" fill="#4A98E8"/><g fill="#8E8E8E"><rect x="5" y="6.6" width="2.2" height="1.1"/><rect x="2" y="8.8" width="2.2" height="1.1"/><rect x="5" y="8.8" width="2.2" height="1.1"/><rect x="8" y="8.8" width="2" height="1.1"/><rect x="2" y="11" width="2.2" height="1.1"/><rect x="5" y="11" width="2.2" height="1.1"/></g><g fill="#F08030"><rect x="2" y="6.6" width="2.2" height="1.1"/><rect x="8" y="6.6" width="2" height="1.1"/></g><g transform="translate(0.2,0.5)"><path d="M13 5.6 L15.3 7.9 L8.7 14.5 L6.4 12.2Z" fill="#F59A1A"/><path d="M13.6 6.2 L14.7 7.3 L8.1 13.9 L7 12.8Z" fill="#FFC040"/><path d="M6.4 12.2 L8.7 14.5 L5.9 15.5Z" fill="#C89060"/><path d="M5.9 15.5 L6.3 14.3 L7.1 15.1Z" fill="#604020"/><path d="M12 6.6 L13 5.6 L15.3 7.9 L14.3 8.9Z" fill="#E8E8E8" stroke="#808080" stroke-width="0.4"/><path d="M13 5.6 L14 4.6 Q15.2 4.2 15.9 5 Q16.6 5.9 16.2 6.9 L15.3 7.9Z" fill="#E878C8"/></g></svg>
<div class="b" style="left:561px;top:425px;">Enviro:</div>
<div class="ck" style="left:610px;top:424px;"><div class="cki"></div></div>

<div class="grp" style="left:557px;top:455px;width:279px;height:150px;"></div><div class="abs" style="left:567px;top:453px;width:156px;height:5px;background:#E3EAF4;"></div><div class="lg" style="left:569px;top:449px;letter-spacing:0.16px;">Parent/Substitute Products:</div>
<div class="b" style="left:561px;top:467px;letter-spacing:0.03px;">Parent Product:</div>
<div class="in" style="left:680px;top:463px;width:122px;height:22px;"><div class="abs" style="right:0;top:0;width:16px;height:20px;background:#E3EAF4;"></div></div><svg class="abs" style="left:785px;top:466px" width="16" height="16" viewBox="0 0 16 16"><defs><radialGradient id="lg785_466" cx="0.62" cy="0.66" r="0.7"><stop offset="0" stop-color="#BDEBFB"/><stop offset="0.55" stop-color="#8FD0F6"/><stop offset="1" stop-color="#469FEA"/></radialGradient></defs><line x1="11.2" y1="11.6" x2="13.5" y2="14.1" stroke="#CC861C" stroke-width="3" stroke-linecap="round"/><circle cx="13.3" cy="13.9" r="0.9" fill="#F6C050"/><circle cx="6.5" cy="6.8" r="5.7" fill="#fff" stroke="#9A9A9A" stroke-width="1.4"/><circle cx="6.5" cy="6.8" r="4.3" fill="url(#lg785_466)"/></svg>
<div class="b" style="left:561px;top:515px;letter-spacing:-0.08px;">Parent U/M:</div>
<div class="b" style="left:561px;top:539px;">Parent-Child Conv Fact:</div>
<div class="in" style="left:712px;top:535px;width:58px;height:22px;"></div>
<div class="b" style="left:562px;top:563px;letter-spacing:-0.12px;">Substitute Product:</div>
<div class="in" style="left:680px;top:559px;width:122px;height:22px;"><div class="abs" style="right:0;top:0;width:16px;height:20px;background:#E3EAF4;"></div></div><svg class="abs" style="left:785px;top:562px" width="16" height="16" viewBox="0 0 16 16"><defs><radialGradient id="lg785_562" cx="0.62" cy="0.66" r="0.7"><stop offset="0" stop-color="#BDEBFB"/><stop offset="0.55" stop-color="#8FD0F6"/><stop offset="1" stop-color="#469FEA"/></radialGradient></defs><line x1="11.2" y1="11.6" x2="13.5" y2="14.1" stroke="#CC861C" stroke-width="3" stroke-linecap="round"/><circle cx="13.3" cy="13.9" r="0.9" fill="#F6C050"/><circle cx="6.5" cy="6.8" r="5.7" fill="#fff" stroke="#9A9A9A" stroke-width="1.4"/><circle cx="6.5" cy="6.8" r="4.3" fill="url(#lg785_562)"/></svg>

<!-- status bar -->
<div class="abs" style="left:0;top:645px;width:882px;height:1px;background:#F4F7FC;"></div>
<div class="abs" style="left:0;top:646px;width:882px;height:28px;background:#F0F0F0;border-top:1px solid #101010;"></div>
<div class="abs" style="left:0;top:647px;width:882px;height:1px;background:#FFFFFF;"></div>
<div class="abs" style="left:0;top:672px;width:882px;height:1px;background:#FFFFFF;"></div>
<div class="abs" style="left:36px;top:649px;width:810px;height:24px;border-left:1px solid #A0A0A0;border-top:1px solid #A0A0A0;border-right:1px solid #fff;border-bottom:1px solid #fff;"></div>
<svg class="abs" style="left:868px;top:660px" width="12" height="12" viewBox="0 0 12 12"><g fill="#A0A0A0"><rect x="9" y="1" width="2" height="2"/><rect x="5" y="5" width="2" height="2"/><rect x="9" y="5" width="2" height="2"/><rect x="1" y="9" width="2" height="2"/><rect x="5" y="9" width="2" height="2"/><rect x="9" y="9" width="2" height="2"/></g></svg>
<!-- window border -->
<div class="abs" style="left:0;top:0;width:882px;height:1px;background:#6E6E6E;"></div>
<div class="abs" style="left:0;top:0;width:1px;height:674px;background:#4A4A4A;"></div>
<div class="abs" style="left:881px;top:0;width:1px;height:674px;background:#4A4A4A;"></div>
<div class="abs" style="left:0;top:673px;width:882px;height:1px;background:#6E6E6E;"></div>
</div>
</body>
</html>
